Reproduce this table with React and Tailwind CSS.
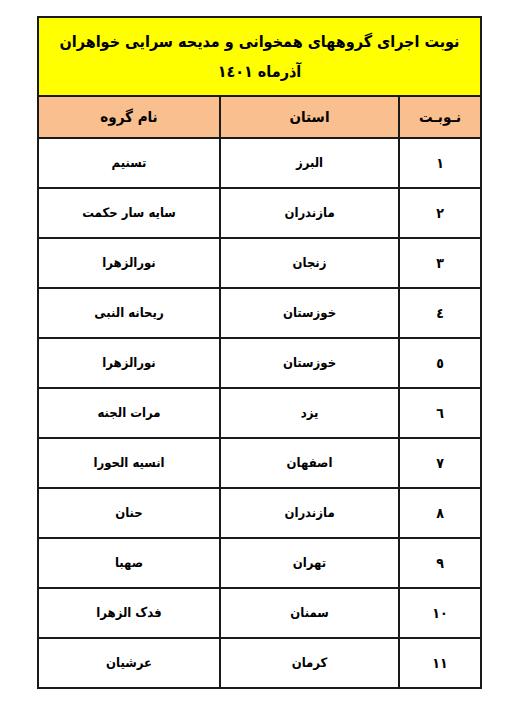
const rows = [
  ["١", "البرز", "تسنیم"],
  ["٢", "مازندران", "سایه سار حکمت"],
  ["٣", "زنجان", "نورالزهرا"],
  ["٤", "خوزستان", "ریحانه النبی"],
  ["٥", "خوزستان", "نورالزهرا"],
  ["٦", "یزد", "مرات الجنه"],
  ["٧", "اصفهان", "انسیه الحورا"],
  ["٨", "مازندران", "حنان"],
  ["٩", "تهران", "صهبا"],
  ["١٠", "سمنان", "فدک الزهرا"],
  ["١١", "کرمان", "عرشیان"],
];

export default function App() {
  return (
    <div
      className="w-[514px] h-[707px] bg-white pt-[16px] pl-[37px]"
      style={{ fontFamily: '"DejaVu Sans Condensed", "DejaVu Sans", sans-serif' }}
    >
      <table
        dir="rtl"
        className="w-[443px] border-collapse border-2 border-[#1a1a1a] text-black font-bold table-fixed"
      >
        <colgroup>
          <col className="w-[82px]" />
          <col className="w-[179px]" />
          <col className="w-[182px]" />
        </colgroup>
        <thead>
          <tr>
            <th
              colSpan={3}
              className="h-[79px] bg-[#ffff00] border-2 border-[#1a1a1a] text-[16px] leading-[30px] font-bold whitespace-nowrap"
            >
              <div>نوبت اجرای گروههای همخوانی و مدیحه سرایی خواهران</div>
              <div>آذرماه ١٤٠١</div>
            </th>
          </tr>
          <tr className="bg-[#fabf8f] h-[42px] text-[15px]">
            <th className="border-2 border-[#1a1a1a] font-bold">نـوبـت</th>
            <th className="border-2 border-[#1a1a1a] font-bold">استان</th>
            <th className="border-2 border-[#1a1a1a] font-bold">نام گروه</th>
          </tr>
        </thead>
        <tbody>
          {rows.map((r) => (
            <tr key={r[0]} className="h-[50px] text-[13px]">
              <td className="border-2 border-[#1a1a1a] text-center text-[14px]">{r[0]}</td>
              <td className="border-2 border-[#1a1a1a] text-center">{r[1]}</td>
              <td className="border-2 border-[#1a1a1a] text-center">{r[2]}</td>
            </tr>
          ))}
        </tbody>
      </table>
    </div>
  );
}
